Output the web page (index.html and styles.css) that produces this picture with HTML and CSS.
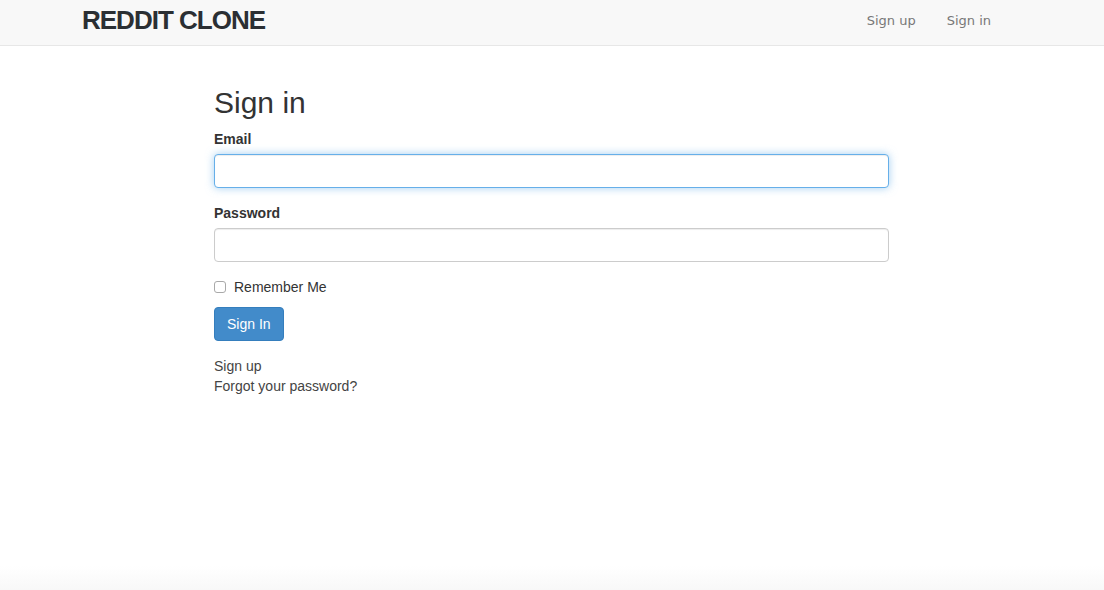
FILE: index.html
```html
<!DOCTYPE html>
<html lang="en">
<head>
<meta charset="utf-8">
<title>Reddit Clone - Sign in</title>
<link rel="stylesheet" href="styles.css">
</head>
<body>
<nav class="navbar">
  <div class="navbar-inner">
    <a class="brand" href="#">REDDIT CLONE</a>
    <ul class="nav-links">
      <li><a href="#">Sign up</a></li>
      <li><a href="#">Sign in</a></li>
    </ul>
  </div>
</nav>
<main class="content">
  <h2 class="title">Sign in</h2>
  <form class="form">
    <div class="form-group">
      <label class="label" for="email">Email</label>
      <input class="input input-focus" id="email" type="email">
    </div>
    <div class="form-group">
      <label class="label" for="password">Password</label>
      <input class="input" id="password" type="password">
    </div>
    <div class="checkbox">
      <label class="check-label"><input class="check" type="checkbox"><span>Remember Me</span></label>
    </div>
    <button class="btn" type="button">Sign In</button>
  </form>
  <div class="links">
    <a href="#">Sign up</a>
    <a href="#">Forgot your password?</a>
  </div>
</main>
</body>
</html>
```

FILE: styles.css
```css
* { box-sizing: border-box; }
html, body { margin: 0; padding: 0; }
body {
  font-family: "Liberation Sans", Arial, sans-serif;
  font-size: 14px;
  line-height: 20px;
  color: #333;
  min-height: 100vh;
  background: linear-gradient(#ffffff calc(100% - 24px), #f8f8f8) fixed;
}
a { text-decoration: none; }

.navbar {
  background: #f8f8f8;
  border-bottom: 1px solid #e7e7e7;
  height: 46px;
}
.navbar-inner {
  height: 40px;
  padding: 0 113px 0 82px;
  display: flex;
  align-items: center;
  justify-content: space-between;
}
.brand {
  font-family: "Liberation Sans", Arial, sans-serif;
  font-weight: bold;
  font-size: 26px;
  letter-spacing: -1px;
  color: #2b2f33;
  line-height: 30px;
}
.nav-links {
  list-style: none;
  margin: 0;
  padding: 0;
  display: flex;
  gap: 31px;
}
.nav-links a {
  font-family: "DejaVu Sans", Verdana, sans-serif;
  font-size: 13px;
  color: #777;
  line-height: 20px;
}

.content {
  width: 675px;
  margin-left: calc(50% - 338px);
  padding-top: 40px;
}
.title {
  font-size: 30px;
  font-weight: normal;
  line-height: 33px;
  margin: 0 0 10px;
  color: #333;
}
.form-group { margin-bottom: 15px; }
.label {
  display: block;
  font-weight: bold;
  margin-bottom: 5px;
}
.input {
  display: block;
  width: 100%;
  height: 34px;
  padding: 6px 12px;
  font: inherit;
  color: #555;
  background: #fff;
  border: 1px solid #ccc;
  border-radius: 4px;
  box-shadow: inset 0 1px 1px rgba(0,0,0,.075);
  outline: none;
}
.input-focus {
  border-color: #66afe9;
  box-shadow: inset 0 1px 1px rgba(0,0,0,.075), 0 0 8px rgba(102,175,233,.6);
}
.checkbox { margin: 0 0 10px; }
.check-label {
  display: flex;
  align-items: center;
  gap: 8px;
  height: 20px;
  color: #333;
}
.check {
  margin: 0;
  width: 12px;
  height: 12px;
  appearance: none;
  -webkit-appearance: none;
  border: 1px solid #a9a9a9;
  border-radius: 3px;
  background: #fff;
}
.btn {
  display: inline-block;
  height: 34px;
  padding: 6px 12px;
  font: inherit;
  color: #fff;
  background: #428bca;
  border: 1px solid #357ebd;
  border-radius: 4px;
  cursor: pointer;
}
.links {
  margin-top: 15px;
  display: flex;
  flex-direction: column;
  align-items: flex-start;
}
.links a { color: #444; }
```
